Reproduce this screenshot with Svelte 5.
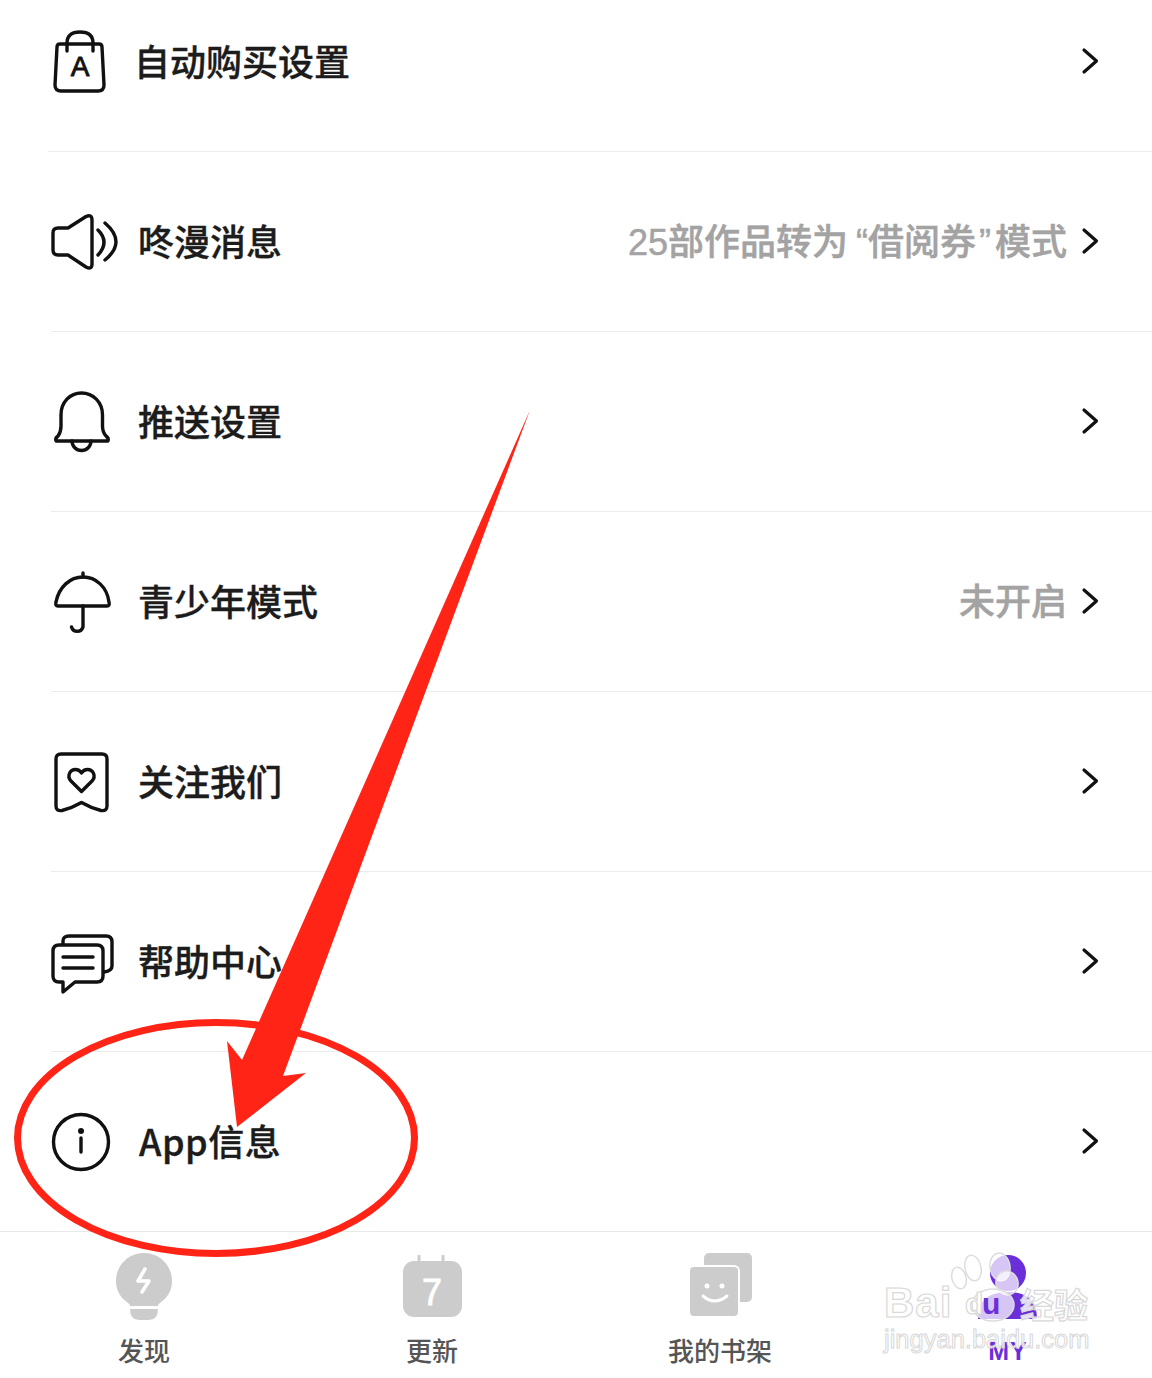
<script>
  const rows = [
    { icon: 'bag', label: '自动购买设置' },
    { icon: 'speaker', label: '咚漫消息', note: '25部作品转为“借阅券”模式' },
    { icon: 'bell', label: '推送设置' },
    { icon: 'umbrella', label: '青少年模式', note: '未开启' },
    { icon: 'heart', label: '关注我们' },
    { icon: 'chat', label: '帮助中心' },
    { icon: 'info', label: 'App信息' }
  ];

  const tabs = [
    { icon: 'bulb', label: '发现' },
    { icon: 'calendar', label: '更新' },
    { icon: 'books', label: '我的书架' },
    { icon: 'person', label: 'MY', active: true }
  ];

  // quotes are set narrower than the CJK full width ones
  const pieces = (note) => note.split(/([“”])/).filter(Boolean);
</script>

<div class="page">
  <div class="list">
    {#each rows as row}
      <div class="row">
        <svg class="row-icon" viewBox="0 0 72 72" fill="none" stroke="#111" stroke-width="3.4" stroke-linecap="round" stroke-linejoin="round">
          {#if row.icon === 'bag'}
            <path d="M12 18 H51 Q54 18 54 21 L56 59 Q56 65 50 65 H13 Q7 65 7 59 L9 21 Q9 18 12 18Z" />
            <path d="M19 25 V17 Q19 6 32 6 Q45 6 45 17 V25" />
            <text class="bag-letter" x="32" y="50" text-anchor="middle">A</text>
          {:else if row.icon === 'speaker'}
            <path d="M10 22 H20 L38 10.500 Q44 8 44 14 V58 Q44 64 38 61 L20 49 H10 Q5 49 5 44 V27 Q5 22 10 22Z" />
            <path d="M50 24 Q62 36 50 49" />
            <path d="M57 17 Q79 36 57 54" />
          {:else if row.icon === 'bell'}
            <path d="M8 55 Q7 52 10 50 Q13 46 13 40 V29 C13 16 22 7 33.500 7 C45 7 54.500 16 54.500 29 V40 Q54.500 46 58 50 Q61 52 60 55 Z" />
            <path d="M24 55 A9.500 9.500 0 0 0 43 55" />
          {:else if row.icon === 'umbrella'}
            <path d="M35 11 V7" />
            <path d="M10 40 Q7 40 8 36 C11 21 22 11 35 11 C48 11 59 21 61 36 Q62 40 59 40 Z" />
            <path d="M35 40 V61 A6 6 0 0 1 23.500 61" />
          {:else if row.icon === 'heart'}
            <path d="M13 8 H54 Q59 8 59 13 V60 Q59 65.500 53 64.500 Q43 62 33.500 56.500 Q24 62 14 64.500 Q8 65.500 8 60 V13 Q8 8 13 8Z" />
            <path d="M33.500 45.500 L23 35 C18.500 30 22 23.500 27.500 23.500 C30 23.500 32 24.500 33.500 27 C35 24.500 37 23.500 39.500 23.500 C45 23.500 48.500 30 44 35 Z" />
          {:else if row.icon === 'chat'}
            <path d="M15 18 V15 Q15 10 21 10 H58 Q64 10 64 16 V40 Q64 45 56 46" />
            <path d="M11 19 H49 Q55 19 55 25 V50 Q55 56 49 56 H27 L15 66 V56 H11 Q5 56 5 50 V25 Q5 19 11 19Z" />
            <path d="M15 31 H45" />
            <path d="M15 42 H45" />
          {:else}
            <circle cx="33" cy="36" r="27.500" />
            <circle cx="33" cy="25" r="3" fill="#111" stroke="none" />
            <path d="M33 32 V46" />
          {/if}
        </svg>
        <span class="label" class:latin={row.icon === 'info'}>{row.label}</span>
        {#if row.note}
          <span class="note">{#each pieces(row.note) as piece}{#if piece === '“'}<span class="quote-open">{piece}</span>{:else if piece === '”'}<span class="quote-close">{piece}</span>{:else}{piece}{/if}{/each}</span>
        {/if}
        <svg class="chevron" viewBox="0 0 18 28" fill="none" stroke="#111" stroke-width="3.2" stroke-linecap="round" stroke-linejoin="round">
          <path d="M3 3 L15.500 14 L3 25" />
        </svg>
      </div>
    {/each}
  </div>

  <nav class="tabbar">
    {#each tabs as tab}
      <div class="tab" class:active={tab.active}>
        <svg class="tab-icon" viewBox="0 0 72 72">
          {#if tab.icon === 'bulb'}
            <path fill="#ccc" d="M36 3 C20 3 8 15.500 8 31 C8 41 13 48 19 52 Q22 54 22 56 H50 Q50 54 53 52 C59 48 64 41 64 31 C64 15.500 52 3 36 3Z" />
            <path fill="#ccc" d="M22 59 H50 Q50 70 41 70 H31 Q22 70 22 59Z" />
            <path fill="none" stroke="#fff" stroke-width="3.500" stroke-linecap="round" stroke-linejoin="round" d="M37 19 L30 31 H41 L34 42" />
          {:else if tab.icon === 'calendar'}
            <rect x="7" y="11" width="59" height="56" rx="11" fill="#ccc" />
            <rect x="21.500" y="5" width="3" height="10" fill="#ccc" />
            <rect x="45.500" y="5" width="3" height="10" fill="#ccc" />
            <text class="cal-day" x="36" y="55" text-anchor="middle">7</text>
          {:else if tab.icon === 'books'}
            <rect x="20" y="3" width="48" height="49" rx="5" fill="#ccc" />
            <rect x="4" y="15" width="52" height="53" rx="6" fill="#fff" />
            <rect x="6" y="17" width="48" height="49" rx="4" fill="#ccc" />
            <circle cx="23" cy="36" r="2.500" fill="#fff" />
            <circle cx="38" cy="36" r="2.500" fill="#fff" />
            <path d="M19 46 Q30.500 56 43 46" fill="none" stroke="#fff" stroke-width="3" stroke-linecap="round" />
          {:else}
            <circle cx="36" cy="23" r="18" fill="#6b2fd9" />
            <path fill="#6b2fd9" d="M6 69 Q6 42 36 42 Q65 42 65 69 Z" />
          {/if}
        </svg>
        <span class="tab-label">{tab.label}</span>
      </div>
    {/each}
  </nav>

  <!-- baidu jingyan watermark over the tab bar -->
  <div class="watermark">
    <svg class="paw" viewBox="0 0 100 74" fill="rgba(255,255,255,0.72)" stroke="#ddd" stroke-width="1.500">
      <ellipse cx="9" cy="28" rx="7" ry="11" transform="rotate(-15 9 28)" />
      <ellipse cx="23" cy="18" rx="8" ry="13" transform="rotate(-12 23 18)" />
      <ellipse cx="50" cy="17" rx="10" ry="14" transform="rotate(-8 50 17)" />
      <ellipse cx="57" cy="33" rx="11" ry="12" transform="rotate(-20 57 33)" />
      <ellipse cx="43" cy="55" rx="21" ry="16" />
    </svg>
    <span class="mark-bai">Bai</span>
    <span class="mark-d">d</span>
    <span class="mark-u">u</span>
    <span class="mark-jy">经验</span>
    <span class="mark-url">jingyan.baidu.com</span>
  </div>

  <!-- red annotation drawn on top of the screenshot -->
  <svg class="annotation" viewBox="0 0 1152 1378" fill="none">
    <ellipse cx="216" cy="1138" rx="198.500" ry="115.500" stroke="#ff2415" stroke-width="7" />
    <path fill="#ff2415" d="M530 410 L242 1060 L227 1041 L237 1127 L306 1073 L283 1076 Z" />
  </svg>
</div>

<style>
  :global(body) {
    background: #fff;
  }

  .page {
    position: relative;
    width: 1152px;
    height: 1378px;
    overflow: hidden;
    background: #fff;
    font-family: "Noto Sans CJK SC", "Noto Sans", sans-serif;
  }

  .list {
    margin-top: -28px;
    display: flex;
    flex-direction: column;
  }

  .row {
    box-sizing: border-box;
    height: 180px;
    display: flex;
    align-items: center;
    margin-left: 51px;
    padding-right: 53px;
    border-bottom: 1px solid #ececec;
  }

  .row:first-child {
    margin-left: 48px;
  }

  .row:last-child {
    margin-left: 0;
    padding-left: 48px;
    border-bottom-color: #e8e8e8;
  }

  .row-icon {
    width: 72px;
    height: 72px;
    flex: none;
    margin-left: -3px;
    margin-right: 18px;
  }

  .row:first-child .row-icon {
    margin-left: 0;
    margin-right: 14px;
  }

  .row:last-child .row-icon {
    margin-left: 0;
  }

  .bag-letter {
    font-family: "Liberation Sans", sans-serif;
    font-size: 28px;
    fill: #111;
    stroke: #111;
    stroke-width: 0.8px;
  }

  .label {
    font-size: 36px;
    font-weight: 500;
    line-height: 50px;
    color: #1c1c1c;
    flex: 1;
    margin-top: -3px;
    -webkit-text-stroke: 0.35px #1c1c1c;
  }

  .label.latin {
    letter-spacing: 0.5px;
    padding-left: 1px;
    margin-top: -3px;
  }

  .note {
    font-family: "Liberation Sans", "Noto Sans CJK SC", sans-serif;
    font-size: 36px;
    font-weight: 500;
    line-height: 50px;
    color: #a3a3a3;
    margin-right: 14px;
    margin-top: 3px;
    -webkit-text-stroke: 0.5px #a3a3a3;
  }

  .quote-open {
    padding-left: 8px;
  }

  .quote-close {
    padding-left: 3px;
    padding-right: 4px;
  }

  .chevron {
    width: 18px;
    height: 28px;
    flex: none;
    margin-top: -1px;
  }

  .tabbar {
    display: grid;
    grid-template-columns: repeat(4, 1fr);
    padding-top: 18px;
  }

  .tab {
    display: flex;
    flex-direction: column;
    align-items: center;
  }

  .tab-icon {
    width: 72px;
    height: 72px;
  }

  .cal-day {
    font-family: "Liberation Sans", sans-serif;
    font-size: 36px;
    fill: #fff;
    stroke: #fff;
    stroke-width: 0.8px;
  }

  .tab-label {
    margin-top: 10px;
    font-size: 26px;
    font-weight: 500;
    line-height: 36px;
    color: #555;
  }

  .tab.active .tab-label {
    margin-top: 11px;
    color: #6b2fd9;
    font-family: "Liberation Sans", sans-serif;
    font-weight: 700;
    font-size: 25px;
    letter-spacing: 1px;
  }

  .watermark {
    position: absolute;
    left: 884px;
    top: 1250px;
    width: 210px;
    height: 110px;
    font-family: "Liberation Sans", sans-serif;
    color: rgba(255, 255, 255, 0.85);
    -webkit-text-stroke: 1.2px #d8d8d8;
    pointer-events: none;
  }

  .paw {
    position: absolute;
    left: 66px;
    top: 0;
    width: 100px;
    height: 74px;
  }

  .watermark span {
    position: absolute;
    white-space: nowrap;
    line-height: 1;
  }

  .mark-bai {
    left: 0;
    top: 32px;
    font-size: 42px;
    font-weight: 700;
    letter-spacing: 1px;
  }

  .mark-d {
    left: 81px;
    top: 39px;
    font-size: 30px;
    font-weight: 700;
  }

  .mark-u {
    left: 98px;
    top: 39px;
    font-size: 30px;
    font-weight: 700;
    color: #6b2fd9;
    -webkit-text-stroke: 0;
  }

  .mark-jy {
    left: 136px;
    top: 37px;
    font-size: 34px;
    font-weight: 700;
    font-family: "Noto Sans CJK SC", sans-serif;
  }

  .mark-url {
    left: 0;
    top: 77px;
    font-size: 25.500px;
    font-weight: 400;
    -webkit-text-stroke: 1px #d8d8d8;
  }

  .annotation {
    position: absolute;
    left: 0;
    top: 0;
    width: 1152px;
    height: 1378px;
    pointer-events: none;
  }
</style>
